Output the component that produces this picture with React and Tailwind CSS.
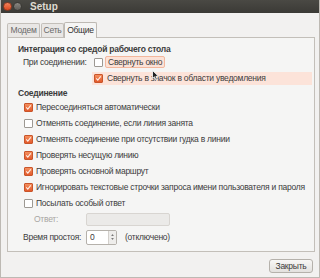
import React from "react";

function Box({ checked }) {
  if (checked) {
    return (
      <span className="w-[9px] h-[9px] shrink-0 rounded-[1px] bg-gradient-to-b from-[#f4905f] to-[#e2592a] border border-[#c9552a] flex items-center justify-center">
        <svg viewBox="0 0 9 9" className="w-[9px] h-[9px]">
          <path d="M1.6 4.4 L3.6 6.6 L7.4 1.8" stroke="#fff3ec" strokeWidth="1.3" fill="none" />
        </svg>
      </span>
    );
  }
  return <span className="w-[9px] h-[9px] shrink-0 rounded-[1px] bg-white border border-[#9d9993]" />;
}

function Row({ checked, children }) {
  return (
    <div className="h-[16px] flex items-center pl-[16px]">
      <Box checked={checked} />
      <span className="ml-[3px]">{children}</span>
    </div>
  );
}

export default function App() {
  return (
    <div className="w-[320px] h-[278px] bg-[#f2f1f0] overflow-hidden flex flex-col font-['Liberation_Sans',sans-serif] text-[8.5px] tracking-[-0.25px] text-[#3c3c3c] whitespace-nowrap relative border-x border-b border-[#bdb9b3]">
      {/* title bar */}
      <div className="h-[13px] shrink-0 bg-gradient-to-b from-[#4a4944] to-[#3b3a36] flex items-center pl-[3px] -mx-px">
        <span className="w-[9px] h-[9px] rounded-full bg-gradient-to-b from-[#f4835a] to-[#d9461c] border border-[#8c3a22]" />
        <span className="w-[9px] h-[9px] ml-px rounded-full bg-gradient-to-b from-[#8a8782] to-[#5e5c58] border border-[#3a3935]" />
        <span className="ml-[8px] font-bold text-[10px] tracking-normal text-[#dfdbd2]">Setup</span>
      </div>

      {/* tabs */}
      <div className="flex items-end h-[23px] pl-[6px] mt-px">
        <div className="h-[14px] w-[33px] flex items-center justify-center bg-[#e9e7e5] border border-b-0 border-[#c3bfb9] text-[#6a6a6a] rounded-t-[2px]">Модем</div>
        <div className="h-[14px] w-[23px] ml-px flex items-center justify-center bg-[#e9e7e5] border border-b-0 border-[#c3bfb9] text-[#6a6a6a] rounded-t-[2px]">Сеть</div>
        <div className="h-[16px] w-[33px] flex items-center justify-center bg-[#f5f5f4] border border-b-0 border-[#bdb9b3] rounded-t-[2px] relative top-px z-10 text-[#333]">Общие</div>
      </div>

      {/* panel */}
      <div className="ml-[6px] w-[308px] h-[215px] bg-[#f5f5f4] border border-[#c3bfb9] flex flex-col">
        <div className="h-[12px] mt-[5px] pl-[10px] flex items-center font-bold">Интеграция со средой рабочего стола</div>
        <div className="h-[14px] flex items-center pl-[15px]">
          <span className="w-[71px]">При соединении:</span>
          <Box checked={false} />
          <span className="ml-[2px] h-[12px] px-[2px] flex items-center bg-[#fbe2d7] border border-[#f3b79d] rounded-[2px]">Свернуть окно</span>
        </div>
        <div className="h-[13px] mt-[3px] ml-[84px] w-[220px] flex items-center pl-[2px] bg-[#fce3d9]">
          <Box checked={true} />
          <span className="ml-[4px]">Свернуть в значок в области уведомления</span>
        </div>
        <div className="h-[11px] mt-[3px] pl-[10px] flex items-center font-bold">Соединение</div>
        <Row checked>Пересоединяться автоматически</Row>
        <Row checked={false}>Отменять соединение, если линия занята</Row>
        <Row checked>Отменять соединение при отсутствии гудка в линии</Row>
        <Row checked>Проверять несущую линию</Row>
        <Row checked>Проверять основной маршрут</Row>
        <Row checked>Игнорировать текстовые строчки запроса имени пользователя и пароля</Row>
        <Row checked={false}>Посылать особый ответ</Row>
        <div className="h-[14px] mt-px flex items-center pl-[26px]">
          <span className="w-[52px] text-[#a8a6a3]">Ответ:</span>
          <span className="w-[84px] h-[13px] bg-[#ebeae8] border border-[#d8d5d1] rounded-[2px]" />
        </div>
        <div className="h-[16px] mt-[3px] flex items-center pl-[15px]">
          <span className="w-[63px]">Время простоя:</span>
          <span className="w-[31px] h-[15px] flex bg-white border border-[#b5b1ab] rounded-[2px] overflow-hidden">
            <span className="flex-1 pl-[3px] flex items-center">0</span>
            <span className="w-[8px] bg-[#eeedeb] border-l border-[#d3d0cc] flex flex-col items-center justify-center gap-[2px]">
              <svg viewBox="0 0 4 3" className="w-[3px] h-[2px]"><path d="M0 3 L2 0 L4 3Z" fill="#777" /></svg>
              <svg viewBox="0 0 4 3" className="w-[3px] h-[2px]"><path d="M0 0 L2 3 L4 0Z" fill="#777" /></svg>
            </span>
          </span>
          <span className="ml-[8px]">(отключено)</span>
        </div>
      </div>

      {/* bottom */}
      <div className="flex justify-end pr-[6px] mt-[7px]">
        <button className="w-[44px] h-[14px] flex items-center justify-center bg-gradient-to-b from-[#f8f7f6] to-[#e3e1de] border border-[#b5b1ab] rounded-[3px] text-[8.5px] tracking-[-0.25px] text-[#3c3c3c]">Закрыть</button>
      </div>

      {/* mouse cursor */}
      <svg viewBox="0 0 7 11" className="absolute left-[151px] top-[70px] w-[7px] h-[11px]">
        <path d="M0.5 0.5 L0.5 8.5 L2.5 6.8 L4 10 L5.3 9.4 L3.9 6.3 L6.5 6.3 Z" fill="#222" stroke="#fff" strokeWidth="0.8" />
      </svg>
    </div>
  );
}
